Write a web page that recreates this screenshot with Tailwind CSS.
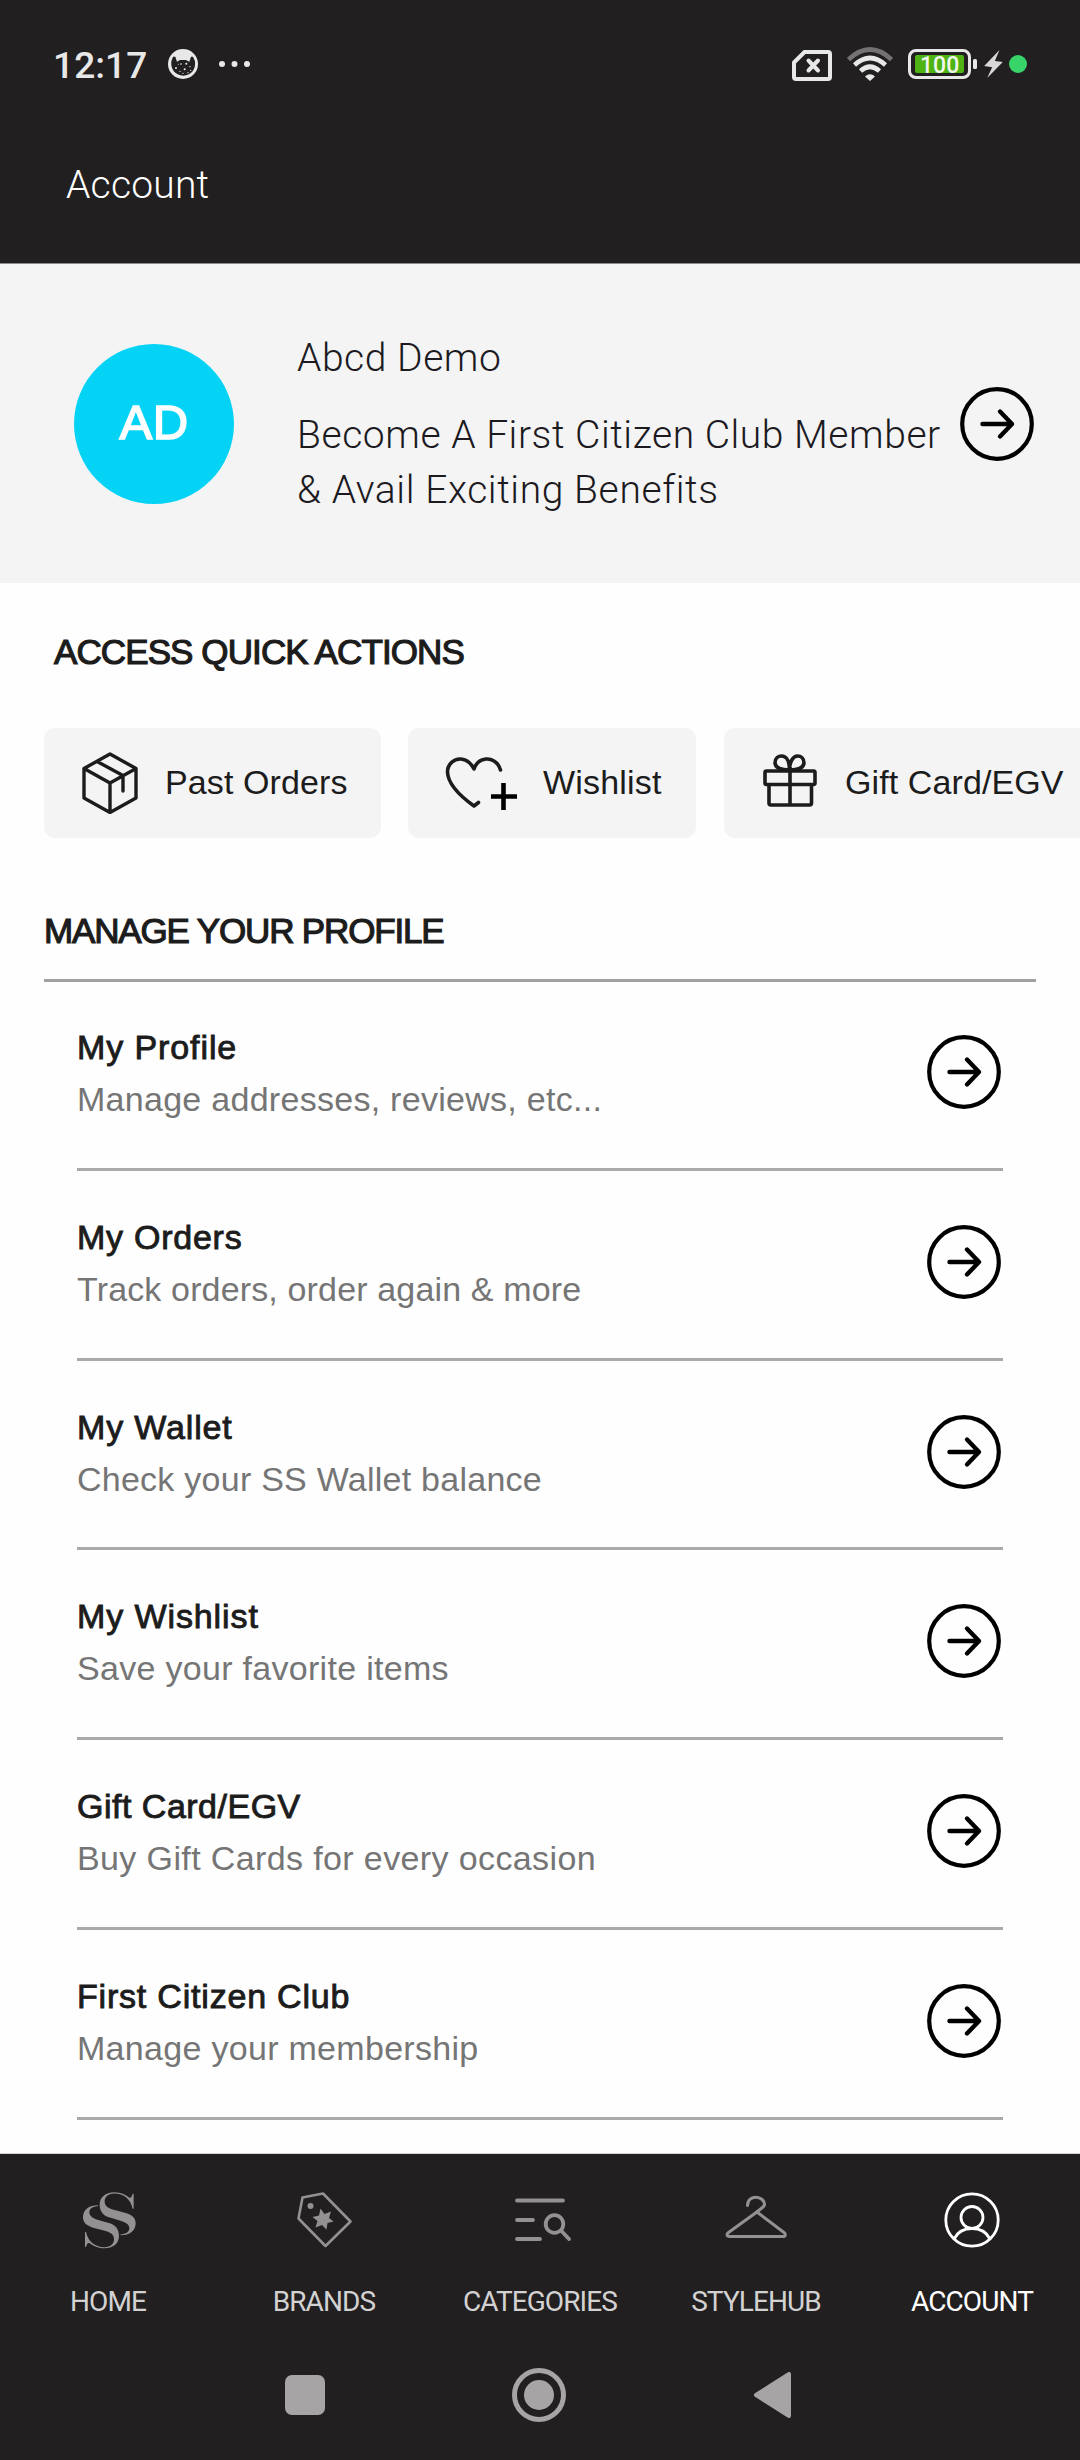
<!DOCTYPE html>
<html lang="en">
<head>
<meta charset="utf-8">
<title>Account</title>
<script src="https://cdn.jsdelivr.net/npm/@tailwindcss/browser@4"></script>
</head>
<body class="bg-[#fefefe]">
<svg class="hidden">
  <symbol id="arrow" viewBox="0 0 74 74">
    <circle cx="37" cy="37" r="34.8" fill="none" stroke="#000" stroke-width="4.2"/>
    <path d="M22.500 37H51M40 24.500L52 37L40 49.500" fill="none" stroke="#000" stroke-width="4.400" stroke-linecap="round" stroke-linejoin="round"/>
  </symbol>
</svg>
<div class="w-[1080px] h-[2460px] overflow-hidden flex flex-col font-['Liberation_Sans',sans-serif] text-[#1c1c1c]">

  <!-- status bar and title -->
  <header class="h-[264px] shrink-0 bg-[#221f20] border-b border-[#8c8a8b]">
    <div class="h-[128px] flex items-center justify-between pl-[53px] pr-[53px] text-[#e8e8e8]">
      <div class="flex items-center">
        <span class="w-[115px] whitespace-nowrap font-['Roboto',sans-serif] font-medium text-[37px] leading-none tracking-[0.1px] mt-[3px]">12:17</span>
        <svg class="w-[30px] h-[30px]" viewBox="24 27 90 90">
          <circle cx="69" cy="72" r="45" fill="#e8e8e8"/>
          <path d="M34 64L39 50L46 50L51 65L60 60H78L88 65L93 50L99 50L105 64C108 90 92 107 70 107C48 107 31 90 34 64Z" fill="#221f20"/>
          <g fill="#e8e8e8"><circle cx="48" cy="84" r="3"/><circle cx="63" cy="72" r="2.500"/><circle cx="79" cy="71" r="3"/><circle cx="74" cy="88" r="3"/><circle cx="90" cy="80" r="2"/><circle cx="60" cy="94" r="2"/><circle cx="84" cy="98" r="2"/><circle cx="55" cy="73" r="1.500"/><circle cx="92" cy="91" r="2"/><circle cx="69" cy="100" r="2"/></g>
        </svg>
        <svg class="w-[31px] h-[6px] ml-[21px]" viewBox="0 0 31 6" fill="#e8e8e8"><circle cx="3" cy="3" r="3"/><circle cx="15.500" cy="3" r="3"/><circle cx="28" cy="3" r="3"/></svg>
      </div>
      <div class="flex items-center">
        <svg class="w-[40px] h-[31px] mt-[3px]" viewBox="0 0 40 31" fill="none" stroke="#e8e8e8" stroke-width="4"><path d="M2 12.500L12.500 2H36Q38 2 38 4V27Q38 29 36 29H4Q2 29 2 27Z"/><path d="M16.500 10.500L26 20.500M26 10.500L16.500 20.500" stroke-linecap="round"/></svg>
        <svg class="w-[46px] h-[34px] ml-[15px]" viewBox="0 0 46 34" fill="none" stroke="#e8e8e8" stroke-width="4.600"><path d="M1.500 12.500Q23-7.500 44.500 12.500" stroke="#747273"/><path d="M7.500 18Q23 4 38.500 18"/><path d="M13.500 24Q23 15.500 32.500 24"/><path d="M18 29.500Q23 25 28 29.500L23 34Z" fill="#e8e8e8" stroke="none"/></svg>
        <div class="relative w-[69px] h-[30px] ml-[15px]">
          <svg class="w-[69px] h-[30px]" viewBox="0 0 69 30"><rect x="1.500" y="1.500" width="60" height="27" rx="6.500" fill="none" stroke="#e8e8e8" stroke-width="3"/><rect x="7" y="6" width="49" height="18" rx="2" fill="#4fb313"/><rect x="65" y="10" width="4" height="10" rx="1.500" fill="#e8e8e8"/></svg>
          <span class="absolute left-[12px] top-[6px] font-['Roboto',sans-serif] font-medium text-[23px] leading-[22px] text-[#f2f7ee]">100</span>
        </div>
        <svg class="w-[19px] h-[28px] ml-[7px]" viewBox="733 90 56 84" fill="#d8d8d8"><path d="M779 90L733 138L757 142L742 174L789 126L765 123Z"/></svg>
        <span class="size-[18px] rounded-full bg-[#38d46a] ml-[6px]"></span>
      </div>
    </div>
    <h1 class="pl-[66px] pt-[34px] font-['Roboto',sans-serif] font-light text-[39px] leading-[46px] tracking-[0.2px] text-white">Account</h1>
  </header>

  <!-- member banner -->
  <section class="h-[319px] shrink-0 bg-[#f4f4f4] flex items-center pl-[74px] pr-[45px]">
    <div class="size-[160px] shrink-0 rounded-full bg-[#05d3f6] flex items-center justify-center text-white text-[49px] tracking-[0.5px] pb-[2px] [-webkit-text-stroke:1.6px_#fff]">AD</div>
    <div class="ml-[63px] mt-[2px] w-[663px] font-['Roboto',sans-serif] font-light text-[39px] leading-[55px] tracking-[0.55px] text-[#1c1a1f]">
      <p>Abcd Demo</p>
      <p class="mt-[22px] whitespace-nowrap">Become A First Citizen Club Member<br><span class="tracking-[0.6px]">&amp; Avail Exciting Benefits</span></p>
    </div>
    <svg class="size-[74px] shrink-0"><use href="#arrow"/></svg>
  </section>

  <!-- quick actions -->
  <section class="shrink-0 h-[309px] pt-[44px]">
    <h2 class="pl-[54px] text-[35px] leading-[50px] tracking-[-0.9px] whitespace-nowrap [-webkit-text-stroke:1.2px_#1c1c1c]">ACCESS QUICK ACTIONS</h2>
    <div class="mt-[51px] ml-[44px] flex gap-[27px] text-[34px] whitespace-nowrap tracking-[0.1px]">
      <div class="w-[337px] h-[110px] shrink-0 rounded-[11px] bg-[#f4f4f4] flex items-center">
        <svg class="w-[56px] h-[62px] ml-[38px]" viewBox="0 0 56 62" fill="none" stroke="#1c1c1c" stroke-width="3.400" stroke-linejoin="round" stroke-linecap="round"><path d="M28 2L54 16.500V46L28 60.500L2 46V16.500ZM2 16.500L28 31L54 16.500M28 31V60.500M16 10L41 23.500V39"/></svg>
        <span class="ml-[27px] mb-[2px]">Past Orders</span>
      </div>
      <div class="w-[288px] h-[110px] shrink-0 rounded-[11px] bg-[#f4f4f4] flex items-center">
        <svg class="w-[72px] h-[58px] ml-[37px]" viewBox="445 755 72 58" fill="none" stroke="#1c1c1c" stroke-width="3.600" stroke-linecap="round" stroke-linejoin="round"><path d="M500.500 771C498 762 490.500 759.500 486 760C480.500 760.500 476 764 474 770C471 764 466 760.500 461 760C454 759.500 447.500 765 447.500 773C448 785 460 797 474 807L478.500 803.500"/><path d="M503.500 784V811M491 797.500H517" stroke="#000" stroke-width="4.600" stroke-linecap="butt"/></svg>
        <span class="ml-[26px] mb-[2px] tracking-[0.2px]">Wishlist</span>
      </div>
      <div class="w-[380px] h-[110px] shrink-0 rounded-[11px] bg-[#f4f4f4] flex items-center ml-px">
        <svg class="w-[56px] h-[58px] ml-[38px] mb-[2px]" viewBox="762 752 56 58" fill="none" stroke="#1c1c1c" stroke-width="3.600" stroke-linejoin="round"><rect x="765" y="770" width="50" height="13.500" rx="1.500"/><path d="M769 783.500V802Q769 804 771 804H809.500Q811.500 804 811.500 802V783.500M790 766V804"/><path d="M789.500 769C782 769 775.500 768 775 762C775 757 778.500 755 781.500 755C787 755 789.500 761 789.500 769C789.500 761 793 755 797.500 755C801 755 804 757.500 804 762C803.500 768 797 769 789.500 769Z"/></svg>
        <span class="ml-[27px] mb-[2px]">Gift Card/EGV</span>
      </div>
    </div>
  </section>

  <!-- profile list -->
  <section class="mx-[44px] grow overflow-hidden">
    <h2 class="h-[90px] pt-[14px] text-[35px] leading-[50px] tracking-[-1.150px] whitespace-nowrap border-b-[3px] border-[#a0a1a1] [-webkit-text-stroke:1.2px_#1c1c1c]">MANAGE YOUR PROFILE</h2>
    <ul id="list" class="px-[33px] -mt-px"></ul>
  </section>

  <!-- tab bar -->
  <nav class="h-[307px] shrink-0 bg-[#221f20] border-t border-[#d4d4d4]">
    <div class="h-[180px] grid grid-cols-5 font-['Roboto',sans-serif] text-[28px] leading-[34px] tracking-[-0.9px] text-[#d3d2d2]">
      <div class="flex flex-col items-center pt-[37px]">
        <svg class="w-[60px] h-[58px] ml-[4px]" viewBox="28 33 180 174" fill="#939192"><path d="M186 86C180 58 160 40.500 130 40.500C112 41 101 52 102 66C103 80 115 86 135 91L165 99C185 105 195 114 195 130C195 152 178 166 150 166L150 163C165 163 176 156 176 145C176 135 168 128 152 123L115 112C96 106 87 92 87 74C87 52 105 37 130 37C152 37 166 46 176 53C182 54 184 48 186 41H189V86Z"/><path transform="rotate(180 116 121)" d="M186 86C180 58 160 40.500 130 40.500C112 41 101 52 102 66C103 80 115 86 135 91L165 99C185 105 195 114 195 130C195 152 178 166 150 166L150 163C165 163 176 156 176 145C176 135 168 128 152 123L115 112C96 106 87 92 87 74C87 52 105 37 130 37C152 37 166 46 176 53C182 54 184 48 186 41H189V86Z"/></svg>
        <span class="mt-[36px]">HOME</span>
      </div>
      <div class="flex flex-col items-center pt-[37px]">
        <svg class="w-[60px] h-[58px]" viewBox="294 2191 60 58" fill="none" stroke="#939192" stroke-width="2.600" stroke-linejoin="round"><path d="M302.500 2197.500L323 2193.500L350.500 2221.500L325.500 2246L298.500 2218.500Z"/><circle cx="310.500" cy="2206" r="3" fill="#939192" stroke="none"/><path d="M320.500 2208.500L324.500 2214L331 2211.500L329 2218L333.500 2221.500L327.500 2223L326.500 2229.500L322 2225L315.500 2227.500L317.500 2221L312.500 2217L319 2215.500Z" fill="#939192" stroke="none"/></svg>
        <span class="mt-[36px]">BRANDS</span>
      </div>
      <div class="flex flex-col items-center pt-[37px]">
        <svg class="w-[60px] h-[58px] ml-[4px]" viewBox="512 2191 60 58" fill="none" stroke="#939192" stroke-width="3.800" stroke-linecap="round"><path d="M517 2200.500H563M517 2220H533M517 2239H540M561 2230.500L569 2239"/><circle cx="554.500" cy="2224" r="8.800"/></svg>
        <span class="mt-[36px]">CATEGORIES</span>
      </div>
      <div class="flex flex-col items-center pt-[37px]">
        <svg class="w-[64px] h-[58px]" viewBox="724 2191 64 58" fill="none" stroke="#939192" stroke-width="3" stroke-linecap="round" stroke-linejoin="round"><path d="M747.500 2205.500C747.500 2194 764.500 2195 764.500 2205C763 2208 759 2210 755.500 2213L728.500 2232.500C726 2234.500 727 2236.500 729 2236.500H783C785.500 2236.500 786 2234 784 2232.500L757 2212"/></svg>
        <span class="mt-[36px]">STYLEHUB</span>
      </div>
      <div class="flex flex-col items-center pt-[37px] text-white">
        <svg class="w-[60px] h-[58px]" viewBox="942 2191 60 58" fill="none" stroke="#fff" stroke-width="2.800"><circle cx="972" cy="2220" r="26.200"/><circle cx="972" cy="2217.500" r="11"/><path d="M954 2239C957.500 2232 964 2228.500 972 2228.500S986.500 2232 990 2239"/></svg>
        <span class="mt-[36px]">ACCOUNT</span>
      </div>
    </div>
    <div class="h-[122px] flex items-center pl-[285px]">
      <span class="size-[40px] rounded-[7px] bg-[#a6a4a5]"></span>
      <svg class="size-[54px] ml-[187px]" viewBox="0 0 54 54"><circle cx="27" cy="27" r="24.500" fill="none" stroke="#a6a4a5" stroke-width="5"/><circle cx="27" cy="27" r="15" fill="#a6a4a5"/></svg>
      <svg class="w-[37px] h-[46px] ml-[188px]" viewBox="0 0 37 46"><path d="M2 23L35 2V44Z" fill="#a6a4a5" stroke="#a6a4a5" stroke-width="4" stroke-linejoin="round"/></svg>
    </div>
  </nav>
</div>
<script>
// title, title tracking, subtitle, subtitle tracking
const rows = [
  ['My Profile', 'tracking-[0.9px]', 'Manage addresses, reviews, etc...', 'tracking-[0.28px]'],
  ['My Orders', 'tracking-[0.75px]', 'Track orders, order again &amp; more', 'tracking-[0.15px]'],
  ['My Wallet', 'tracking-[0.85px]', 'Check your SS Wallet balance', 'tracking-[0.25px]'],
  ['My Wishlist', 'tracking-[0.9px]', 'Save your favorite items', 'tracking-[0.3px]'],
  ['Gift Card/EGV', 'tracking-[0.5px]', 'Buy Gift Cards for every occasion', 'tracking-[0.38px]'],
  ['First Citizen Club', 'tracking-[0.8px]', 'Manage your membership', 'tracking-[0.3px]'],
];
document.getElementById('list').innerHTML = rows.map(([title, titleTracking, sub, subTracking]) => `
  <li class="h-[189.8px] flex justify-between pt-[40px] border-b-[3px] border-[#a9aaaa] text-[34px] leading-[52px] whitespace-nowrap">
    <div>
      <p class="${titleTracking} [-webkit-text-stroke:0.9px_#1c1c1c]">${title}</p>
      <p class="${subTracking} text-[#757575]">${sub}</p>
    </div>
    <svg class="size-[74px] shrink-0 mt-[14px] mr-[2px]"><use href="#arrow"/></svg>
  </li>`).join('');
</script>
</body>
</html>
